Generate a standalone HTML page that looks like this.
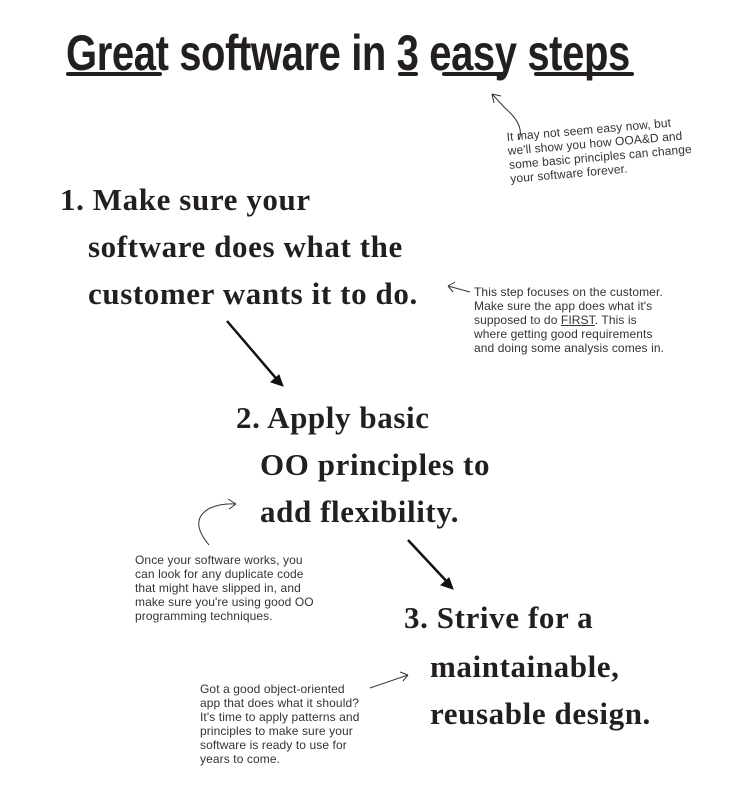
<!DOCTYPE html>
<html><head><meta charset="utf-8"><style>
body{margin:0;width:734px;height:791px;background:#fff;position:relative;overflow:hidden;font-family:"Liberation Serif",serif;color:#231f20}
.t{position:absolute;white-space:nowrap}
.title{left:66px;top:24px;font-family:"Liberation Sans Narrow","Liberation Sans",sans-serif;font-weight:bold;font-size:50px;transform:scaleX(0.8);transform-origin:left top;letter-spacing:-0.5px}
.u{position:absolute;height:4px;background:#231f20;border-radius:2px}
.s{font-weight:bold;font-size:31px;line-height:47px;letter-spacing:0.6px}
.n{font-family:"Liberation Sans Narrow","Liberation Sans",sans-serif;font-size:12px;line-height:14px;color:#333;letter-spacing:0.1px}
</style></head><body>
<div class="t title">Great software in 3 easy steps</div>
<div class="u" style="left:66px;top:72px;width:96px"></div>
<div class="u" style="left:398px;top:72px;width:20px"></div>
<div class="u" style="left:442px;top:72px;width:62px"></div>
<div class="u" style="left:534px;top:72px;width:100px"></div>

<div class="t s" style="left:60px;top:176px">1. Make sure your</div>
<div class="t s" style="left:88px;top:223px">software does what the</div>
<div class="t s" style="left:88px;top:270px">customer wants it to do.</div>

<div class="t s" style="left:236px;top:394px">2. Apply basic</div>
<div class="t s" style="left:260px;top:441px">OO principles to</div>
<div class="t s" style="left:260px;top:488px">add flexibility.</div>

<div class="t s" style="left:404px;top:594px">3. Strive for a</div>
<div class="t s" style="left:430px;top:643px">maintainable,</div>
<div class="t s" style="left:430px;top:690px">reusable design.</div>

<div class="t n" style="left:506px;top:130px;transform:rotate(-5deg);transform-origin:left top">It may not seem easy now, but<br>we'll show you how OOA&amp;D and<br>some basic principles can change<br>your software forever.</div>
<div class="t n" style="left:474px;top:285px">This step focuses on the customer.<br>Make sure the app does what it's<br>supposed to do <u>FIRST</u>. This is<br>where getting good requirements<br>and doing some analysis comes in.</div>
<div class="t n" style="left:135px;top:553px">Once your software works, you<br>can look for any duplicate code<br>that might have slipped in, and<br>make sure you're using good OO<br>programming techniques.</div>
<div class="t n" style="left:200px;top:682px">Got a good object-oriented<br>app that does what it should?<br>It's time to apply patterns and<br>principles to make sure your<br>software is ready to use for<br>years to come.</div>

<svg width="734" height="791" style="position:absolute;left:0;top:0" fill="none" stroke="#333">
<path d="M519 140 Q525 125 505 108 L492 94 M492 94 l2 9 M492 94 l9 2" stroke-width="1"/>
<path d="M470 292 L448 286 M448 286 l7 -4 M448 286 l5 6" stroke-width="1"/>
<path d="M227 321 L280 383" stroke="#111" stroke-width="2.5"/>
<path d="M283 386 l-12 -4 l8 -7 z" fill="#111" stroke="#111"/>
<path d="M408 540 L450 585" stroke="#111" stroke-width="2.5"/>
<path d="M453 589 l-12 -4 l8 -7 z" fill="#111" stroke="#111"/>
<path d="M209 545 Q188 520 210 508 Q222 503 236 504 M236 504 l-8 -5 M236 504 l-7 5" stroke-width="1"/>
<path d="M370 688 L408 675 M408 675 l-8 -3 M408 675 l-5 6" stroke-width="1"/>
</svg>
</body></html>
